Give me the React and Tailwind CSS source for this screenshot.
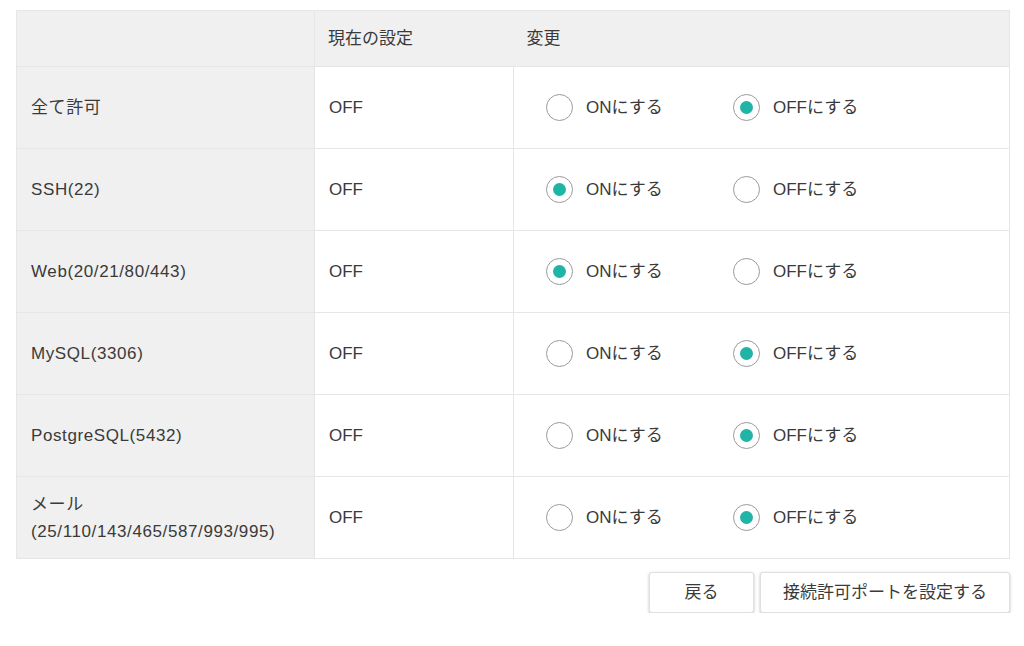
import { useState } from 'react';

const ROWS = [
  { id: 'all', label: '全て許可', current: 'OFF', checked: 'off' },
  { id: 'ssh', label: 'SSH(22)', current: 'OFF', checked: 'on' },
  { id: 'web', label: 'Web(20/21/80/443)', current: 'OFF', checked: 'on' },
  { id: 'mysql', label: 'MySQL(3306)', current: 'OFF', checked: 'off' },
  { id: 'pg', label: 'PostgreSQL(5432)', current: 'OFF', checked: 'off' },
  { id: 'mail', label: 'メール', sub: '(25/110/143/465/587/993/995)', current: 'OFF', checked: 'off' },
];

const Radio = ({ checked, label, onClick }) => (
  <button onClick={onClick} className="flex items-center gap-[13px] text-[#3a3a3a]">
    <span className="w-[27px] h-[27px] rounded-full border border-[#9a9a9a] bg-white flex items-center justify-center">
      {checked && <span className="w-[13px] h-[13px] rounded-full bg-[#1fb5a6]"></span>}
    </span>
    <span>{label}</span>
  </button>
);

const App = () => {
  const [values, setValues] = useState(
    Object.fromEntries(ROWS.map(r => [r.id, r.checked]))
  );

  return (
    <div className="px-4 pt-[10px] text-[17px] text-[#3a3a3a]" style={{ fontFamily: '"Liberation Sans", "Noto Sans CJK JP", sans-serif' }}>
      <table className="w-[994px] border-collapse">
        <thead>
          <tr className="bg-[#f0f0f0] h-[56px]">
            <th className="w-[298px] border border-[#e6e6e6]"></th>
            <th className="w-[199px] text-left font-normal pl-[13px] border-y border-[#e6e6e6]">現在の設定</th>
            <th className="text-left font-normal pl-[13px] border border-l-0 border-[#e6e6e6]">変更</th>
          </tr>
        </thead>
        <tbody>
          {ROWS.map(row => (
            <tr key={row.id} className="h-[82px]">
              <td className="bg-[#f0f0f0] pl-[14px] border border-[#e6e6e6] leading-[27px] tracking-[0.6px]">
                <div>{row.label}</div>
                {row.sub && <div>{row.sub}</div>}
              </td>
              <td className="pl-[14px] border border-[#e6e6e6]">{row.current}</td>
              <td className="pl-[32px] border border-[#e6e6e6]">
                <div className="flex items-center gap-[28px]">
                  <div className="w-[159px]">
                    <Radio
                      checked={values[row.id] === 'on'}
                      label="ONにする"
                      onClick={() => setValues({ ...values, [row.id]: 'on' })}
                    />
                  </div>
                  <Radio
                    checked={values[row.id] === 'off'}
                    label="OFFにする"
                    onClick={() => setValues({ ...values, [row.id]: 'off' })}
                  />
                </div>
              </td>
            </tr>
          ))}
        </tbody>
      </table>

      {/* Actions */}
      <div className="w-[994px] flex justify-end gap-[6px] mt-[13px]">
        <button className="w-[105px] h-[41px] bg-white rounded-[3px] border border-[#e0e0e0] shadow-[0_1px_3px_rgba(0,0,0,0.25)]">戻る</button>
        <button className="w-[250px] h-[41px] bg-white rounded-[3px] border border-[#e0e0e0] shadow-[0_1px_3px_rgba(0,0,0,0.25)]">接続許可ポートを設定する</button>
      </div>
    </div>
  );
};

export default App;
